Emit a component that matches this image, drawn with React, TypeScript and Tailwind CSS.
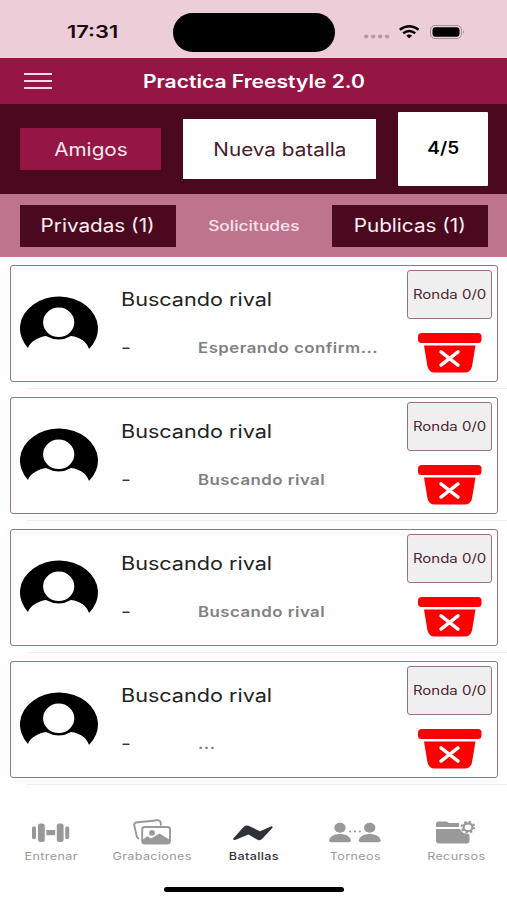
import React from 'react';
import clsx from 'clsx';

interface Battle {
  id: number;
  name: string;
  score: string;
  status: string;
  round: string;
}

const battles: Battle[] = [
  { id: 1, name: 'Buscando rival', score: '-', status: 'Esperando confirm...', round: 'Ronda 0/0' },
  { id: 2, name: 'Buscando rival', score: '-', status: 'Buscando rival', round: 'Ronda 0/0' },
  { id: 3, name: 'Buscando rival', score: '-', status: 'Buscando rival', round: 'Ronda 0/0' },
  { id: 4, name: 'Buscando rival', score: '-', status: '...', round: 'Ronda 0/0' },
];

// Wide lettering used all over the app
const Wide = ({ children, className = 'scale-x-[1.2]' }: { children: React.ReactNode; className?: string }) => (
  <span className={clsx('inline-block whitespace-nowrap', className)}>{children}</span>
);

const AvatarIcon = () => (
  <svg width="78" height="54" viewBox="0 0 78 54">
    <path d="M8 52A39 32 0 1 1 69 53C67 46 60 41 51 40Q39 47 26 40C18 41 10 46 8 52Z" fill="#000" />
    <ellipse cx="38.7" cy="26.3" rx="15.6" ry="14.7" fill="#fff" />
  </svg>
);

const BinIcon = () => (
  <svg width="64" height="40" viewBox="0 0 64 40" fill="#ff0000">
    <rect x="0" y="0" width="63.5" height="10" rx="3.5" />
    <path d="M6 12.6H57.5L54 33.500Q52.700 39.500 46.500 39.500H17Q10.800 39.500 9.500 33.500Z" />
    <path d="M23 18.800L40 32.200M40 18.800L23 32.200" stroke="#fff" strokeWidth="3.400" strokeLinecap="round" />
  </svg>
);

const TrainIcon = () => (
  <svg width="38" height="28" viewBox="0 0 38 28" fill="#999">
    <rect x="0" y="8.500" width="4" height="12.500" rx="1.500" />
    <rect x="6" y="5.500" width="6.800" height="18.500" rx="2.500" />
    <rect x="14.300" y="12" width="8.900" height="5.200" />
    <rect x="24.800" y="5.500" width="6.800" height="18.500" rx="2.500" />
    <rect x="33.200" y="8.500" width="4" height="12.500" rx="1.500" />
  </svg>
);

const GalleryIcon = () => (
  <svg width="38" height="28" viewBox="0 0 38 28" fill="none" stroke="#999" strokeWidth="1.900">
    <path d="M6 20.500Q4.300 20.300 3.800 18.500L1.200 7Q1 5 3 4.500L24.500 2.200Q27 2 27.500 4L28 7.500" />
    <rect x="9.200" y="9" width="27.800" height="16.500" rx="2.500" />
    <circle cx="19" cy="14.800" r="2.900" fill="#999" stroke="none" />
    <path d="M9.500 22L14 18.200L18 20.500L26.500 15.500L37 22V24Q37 25.800 35 25.800H12Q9.500 25.800 9.500 24Z" fill="#999" stroke="none" />
  </svg>
);

const BattleIcon = () => (
  <svg width="40" height="28" viewBox="0 0 40 28" fill="#30323a">
    <path d="M.3 20.500L10.500 9Q12.500 6.800 15.500 7.800L27 13.200L38.500 8.300Q40.300 8.300 39.300 10L29.500 20.500Q27 23.200 24 21.500L15.500 16.600L2 22Q-.2 22.400 .3 20.500Z" />
  </svg>
);

const TournamentIcon = () => (
  <svg width="52" height="28" viewBox="0 0 52 28" fill="#999">
    <ellipse cx="11" cy="9.700" rx="5.700" ry="5" />
    <path d="M0 22.500C1 18 6 16 11 16S21 18 22 22.500Q22 24.200 20 24.200H2Q0 24.200 0 22.500Z" />
    <ellipse cx="40.700" cy="9.700" rx="5.700" ry="5" />
    <path d="M29.700 22.500C30.700 18 35.700 16 40.700 16S50.700 18 51.700 22.500Q51.700 24.200 49.700 24.200H31.700Q29.700 24.200 29.700 22.500Z" />
    <ellipse cx="21.200" cy="13.500" rx="1.100" ry=".9" />
    <ellipse cx="26" cy="13.500" rx="1.100" ry=".9" />
    <ellipse cx="30.800" cy="13.500" rx="1.100" ry=".9" />
  </svg>
);

const ResourcesIcon = () => (
  <svg width="40" height="28" viewBox="0 0 40 28" fill="#999">
    <path d="M0 9V5.500Q0 3.500 2.500 3.500H10Q11.500 3.500 13 5H23V9Z" />
    <path d="M0 11H24Q25.500 15.500 33.500 16.500V22.500Q33.500 25.500 30.500 25.500H3Q0 25.500 0 22.500Z" />
    <ellipse cx="32" cy="9.200" rx="4.500" ry="3.900" fill="none" stroke="#999" strokeWidth="2.200" />
    <ellipse cx="32" cy="9.200" rx="6.300" ry="5.500" fill="none" stroke="#999" strokeWidth="2" strokeDasharray="2.320 2.320" />
  </svg>
);

const BattleCard = ({ battle }: { battle: Battle }) => (
  <div className="h-[132px] px-[10px] pt-[8px]">
    <div className="flex h-[117px] w-[488px] rounded-[3px] border border-[#9b7180] bg-white">
      <div className="w-[110px] pt-[30px] pl-[9px]">
        <AvatarIcon />
      </div>
      <div className="w-[286px]">
        <div className="h-[48px] pt-[22px] text-[18px] leading-6 text-[#222]">
          <Wide className="origin-left scale-x-[1.2]">{battle.name}</Wide>
        </div>
        <div className="flex pt-[22px] leading-6">
          <div className="w-[77px] text-[18px] text-[#333]">
            <Wide className="origin-left scale-x-[1.2]">{battle.score}</Wide>
          </div>
          <div className="text-[14px] font-semibold tracking-[0.4px] text-[#808080]">
            <Wide className="origin-left scale-x-[1.2]">{battle.status}</Wide>
          </div>
        </div>
      </div>
      <div className="flex flex-col">
        <div className="mt-[4px] flex h-[49px] w-[85px] items-center justify-center rounded-[3px] border border-[#9b7180] bg-[#efefef] pt-px text-[12.5px] text-[#4f2432]">
          <Wide>{battle.round}</Wide>
        </div>
        <div className="pt-[14px] pl-[11px]">
          <BinIcon />
        </div>
      </div>
    </div>
    <div className="mt-[6px] -mr-[10px] ml-[17px] h-px bg-[#ededef]" />
  </div>
);

const tabs = [
  { label: 'Entrenar', icon: <TrainIcon /> },
  { label: 'Grabaciones', icon: <GalleryIcon /> },
  { label: 'Batallas', icon: <BattleIcon />, active: true },
  { label: 'Torneos', icon: <TournamentIcon /> },
  { label: 'Recursos', icon: <ResourcesIcon /> },
];

export default function App() {
  return (
    <div className="flex h-[900px] w-[507px] flex-col overflow-hidden bg-white font-['Inter','Liberation_Sans',sans-serif]">
      {/* Status bar */}
      <div className="flex h-[58px] shrink-0 bg-[#eccdd8]">
        <div className="w-[173px] pt-[20px] pl-[67px] text-[17.5px] leading-6 font-semibold text-[#1b0c12]">
          <Wide className="origin-left scale-x-[1.25]">17:31</Wide>
        </div>
        <div className="mt-[13px] h-[39px] w-[162px] rounded-full bg-black" />
        <svg className="mt-[20px] ml-[29px]" width="102" height="24" viewBox="0 0 102 24">
          <g fill="#b59aa4">
            <ellipse cx="2.300" cy="16.500" rx="2.200" ry="1.900" />
            <ellipse cx="9.200" cy="16.500" rx="2.200" ry="1.900" />
            <ellipse cx="16.100" cy="16.500" rx="2.200" ry="1.900" />
            <ellipse cx="23" cy="16.500" rx="2.200" ry="1.900" />
          </g>
          <g fill="none" stroke="#000" strokeWidth="2.400">
            <path d="M35.800 9.800Q45.200 2.800 54.600 9.800" />
            <path d="M39.200 13.200Q45.200 8.600 51.200 13.200" />
          </g>
          <path d="M42.300 15.700Q45.200 13.500 48.100 15.700L45.200 18.300Z" />
          <rect x="66.500" y="5.500" width="31" height="13" rx="4.500" fill="none" stroke="#a88f98" />
          <rect x="68.500" y="7.200" width="27" height="9.600" rx="3" />
          <path d="M99 10Q101 12 99 14Z" fill="#a88f98" />
        </svg>
      </div>

      {/* Title bar */}
      <div className="relative flex h-[46px] shrink-0 items-center justify-center bg-[#951644] text-[18px] font-semibold text-white">
        <div className="absolute left-[24px] flex w-[28px] flex-col gap-[5px]">
          <div className="h-[2px] bg-[#f5dce5]" />
          <div className="h-[2px] bg-[#f5dce5]" />
          <div className="h-[2px] bg-[#f5dce5]" />
        </div>
        <Wide className="scale-x-[1.17]">Practica Freestyle 2.0</Wide>
      </div>

      {/* Actions */}
      <div className="flex h-[90px] shrink-0 items-center gap-[22px] bg-[#4b091f] pr-[19px] pl-[20px] text-[18px]">
        <button className="h-[42px] w-[141px] bg-[#951644] text-[#fbeaf0]">
          <Wide className="scale-x-[1.15]">Amigos</Wide>
        </button>
        <button className="h-[60px] w-[193px] bg-white text-[#4b1a2a]">
          <Wide className="scale-x-[1.15]">Nueva batalla</Wide>
        </button>
        <div className="flex h-[74px] w-[90px] items-center justify-center rounded-[1px] bg-white text-[17px] font-semibold text-black">
          <Wide className="scale-x-[1.12]">4/5</Wide>
        </div>
      </div>

      {/* Filters */}
      <div className="flex h-[63px] shrink-0 items-center bg-[#bd748c] pr-[19px] pl-[20px] text-[18px] text-[#fdf0f4]">
        <button className="h-[42px] w-[156px] bg-[#4b091f]">
          <Wide className="scale-x-[1.15]">Privadas (1)</Wide>
        </button>
        <button className="w-[156px] text-[14px] font-medium text-[#fbe3ec]">
          <Wide className="scale-x-[1.24]">Solicitudes</Wide>
        </button>
        <button className="h-[42px] w-[156px] bg-[#4b091f]">
          <Wide className="scale-x-[1.15]">Publicas (1)</Wide>
        </button>
      </div>

      {/* Battles */}
      <div className="h-[530px] shrink-0">
        {battles.map((battle) => (
          <BattleCard key={battle.id} battle={battle} />
        ))}
      </div>

      {/* Tab bar */}
      <div className="grid grid-cols-5 pt-[31px]">
        {tabs.map((tab) => (
          <div key={tab.label} className="flex flex-col items-center">
            {tab.icon}
            <div
              className={clsx(
                'mt-[3px] text-[10.5px] leading-4 tracking-[0.3px]',
                tab.active ? 'font-medium text-[#30323a]' : 'text-[#999]'
              )}
            >
              <Wide>{tab.label}</Wide>
            </div>
          </div>
        ))}
      </div>
      <div className="mx-auto mt-[22px] h-[5px] w-[180px] shrink-0 rounded-full bg-black" />
    </div>
  );
}
